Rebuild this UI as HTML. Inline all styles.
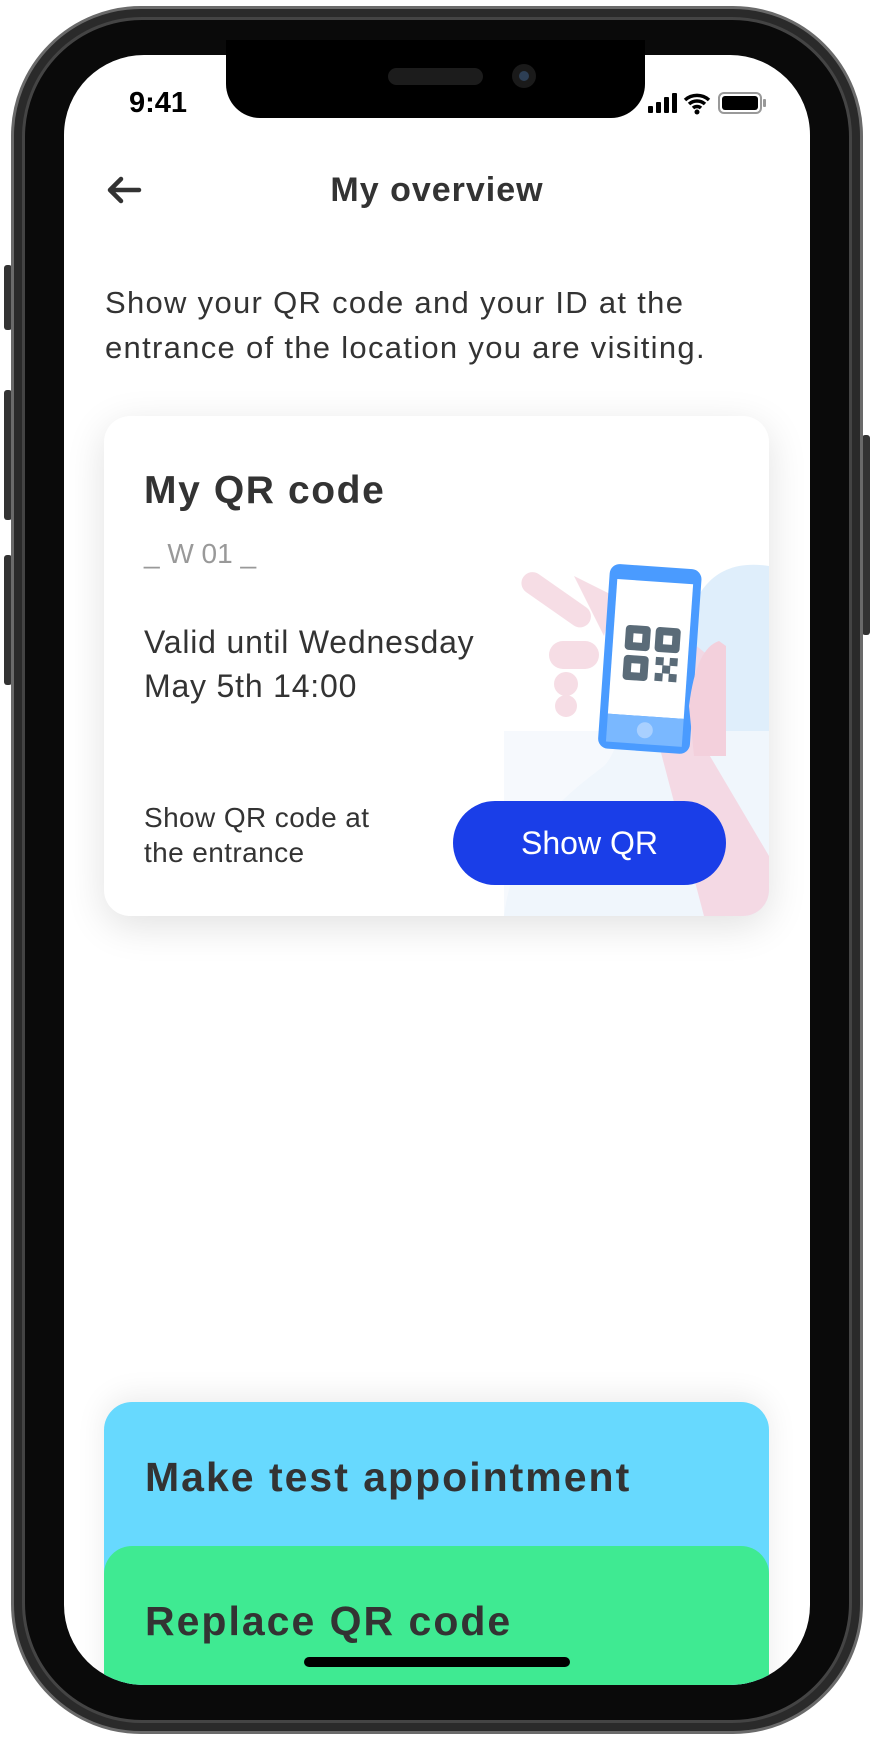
<!DOCTYPE html>
<html><head><meta charset="utf-8"><style>
*{margin:0;padding:0;box-sizing:border-box}
body{width:876px;height:1740px;background:#fff;position:relative;overflow:hidden;font-family:"Liberation Sans",sans-serif;color:#333}
.abs{position:absolute}
.frame{left:11px;top:6px;width:852px;height:1728px;border-radius:130px;background:#2a2a2a;border:3px solid #6a6a6a}
.frame2{left:22px;top:17px;width:830px;height:1706px;border-radius:120px;background:#0a0a0a;border:3px solid #444}
.screen{left:64px;top:55px;width:746px;height:1630px;border-radius:80px;background:#fff;overflow:hidden}
.notch{left:226px;top:40px;width:419px;height:78px;background:#000;border-radius:0 0 34px 34px}
.b{font-weight:bold}
</style></head><body>
<div class="abs" style="left:4px;top:265px;width:8px;height:65px;background:#333;border-radius:3px"></div>
<div class="abs" style="left:4px;top:390px;width:8px;height:130px;background:#333;border-radius:3px"></div>
<div class="abs" style="left:4px;top:555px;width:8px;height:130px;background:#333;border-radius:3px"></div>
<div class="abs" style="left:862px;top:435px;width:8px;height:200px;background:#333;border-radius:3px"></div>
<div class="abs frame"></div>
<div class="abs frame2"></div>
<div class="abs screen">
  <svg class="abs" style="left:41px;top:120px" width="38" height="30" viewBox="0 0 38 30"><path d="M34 15H6M16 4L5 15l11 11" stroke="#333" stroke-width="4.5" fill="none" stroke-linecap="round" stroke-linejoin="round"/></svg>
  <div class="abs b" style="left:0;width:746px;text-align:center;top:116px;font-size:34px;letter-spacing:1px;color:#333">My overview</div>
  <div class="abs" style="left:41px;top:225px;font-size:31px;letter-spacing:1.3px;line-height:45px;color:#333;white-space:nowrap">Show your QR code and your ID at the<br>entrance of the location you are visiting.</div>
  <div class="abs" style="left:40px;top:361px;width:665px;height:500px;border-radius:26px;background:#fff;box-shadow:0 10px 40px rgba(0,0,0,0.12);overflow:hidden">
    <svg class="abs" style="left:400px;top:100px" width="265" height="400" viewBox="0 0 265 400">
      <path d="M265 50 C200 40 180 90 175 160 C120 170 120 230 100 250 C60 280 10 320 0 400 L265 400Z" fill="#dfeefb"/>
      <rect x="0" y="215" width="265" height="185" fill="#f4f8fd" opacity="0.8"/>
      <path d="M150 210 L200 400 L265 400 L265 340 L200 230 L205 140 L180 120 Z" fill="#f5d3df" opacity="0.85"/>
      <path d="M70 60 L110 80 L100 120 Z" fill="#f6dde5"/>
      <rect x="20" y="50" width="80" height="22" rx="11" transform="rotate(35 20 60)" fill="#f6dde5"/>
      <g transform="rotate(4 140 140)">
        <rect x="100" y="50" width="92" height="185" rx="10" fill="#4a9bff"/>
        <rect x="108" y="65" width="76" height="135" fill="#fff"/>
        <rect x="108" y="200" width="76" height="28" fill="#7ab8ff"/>
        <circle cx="146" cy="214" r="8" fill="#a9d0ff"/>
        <g fill="#5a6b78">
          <rect x="120" y="110" width="25" height="25" rx="4"/><rect x="150" y="110" width="25" height="25" rx="4"/>
          <rect x="120" y="140" width="25" height="25" rx="4"/>
          <rect x="152" y="140" width="8" height="8"/><rect x="166" y="140" width="8" height="8"/><rect x="159" y="148" width="8" height="8"/><rect x="152" y="156" width="8" height="8"/><rect x="166" y="156" width="8" height="8"/>
        </g>
        <g fill="#fff"><rect x="128" y="118" width="9" height="9"/><rect x="158" y="118" width="9" height="9"/><rect x="128" y="148" width="9" height="9"/></g>
      </g>
      <rect x="45" y="125" width="50" height="28" rx="14" fill="#f6dde5"/>
      <circle cx="62" cy="168" r="12" fill="#f6dde5"/><circle cx="62" cy="190" r="11" fill="#f6dde5"/>
      <path d="M185 190 C190 150 200 130 215 125 L222 130 L222 240 L190 240 Z" fill="#f3d0dc"/>
    </svg>
    <div class="abs b" style="left:40px;top:53px;font-size:39px;letter-spacing:1.6px;color:#333">My QR code</div>
    <div class="abs" style="left:40px;top:122px;font-size:28px;color:#999">_ W 01 _</div>
    <div class="abs" style="left:40px;top:204px;font-size:32px;letter-spacing:0.8px;line-height:44px;color:#333">Valid until Wednesday<br>May 5th 14:00</div>
    <div class="abs" style="left:40px;top:384px;font-size:28px;letter-spacing:0.4px;line-height:35px;color:#333">Show QR code at<br>the entrance</div>
    <div class="abs" style="left:349px;top:385px;width:273px;height:84px;border-radius:42px;background:#1a3ee8;color:#fff;font-size:32px;line-height:84px;text-align:center">Show QR</div>
  </div>
  <div class="abs" style="left:40px;top:1347px;width:665px;height:400px;border-radius:28px;background:#67d9fe;box-shadow:0 -6px 30px rgba(0,0,0,0.08)"></div>
  <div class="abs b" style="left:81px;top:1399px;font-size:41px;letter-spacing:2px;color:#333">Make test appointment</div>
  <div class="abs" style="left:40px;top:1491px;width:665px;height:300px;border-radius:28px;background:#3fea92"></div>
  <div class="abs b" style="left:81px;top:1543px;font-size:41px;letter-spacing:2px;color:#333">Replace QR code</div>
  <div class="abs" style="left:240px;top:1602px;width:266px;height:10px;border-radius:5px;background:#000"></div>
</div>
<div class="abs notch"></div>
<div class="abs" style="left:388px;top:68px;width:95px;height:17px;border-radius:9px;background:#1c1c1c"></div>
<div class="abs" style="left:512px;top:64px;width:24px;height:24px;border-radius:50%;background:#1a1a1a"><div style="margin:7px;width:10px;height:10px;border-radius:50%;background:#2d3f55"></div></div>
<div class="abs b" style="left:129px;top:87px;font-size:29px;color:#000">9:41</div>
<svg class="abs" style="left:648px;top:91px" width="130" height="26" viewBox="0 0 130 26">
  <rect x="0" y="15" width="5" height="7" rx="1"/><rect x="8" y="11" width="5" height="11" rx="1"/><rect x="16" y="6" width="5" height="16" rx="1"/><rect x="24" y="2" width="5" height="20" rx="1"/>
  <path d="M37 9a18 18 0 0 1 24 0M41 13a12 12 0 0 1 16 0M45 17a6 6 0 0 1 8 0" stroke="#000" stroke-width="3.5" fill="none"/><circle cx="49" cy="21" r="2.5"/>
  <rect x="71" y="2" width="42" height="20" rx="5" fill="none" stroke="#999" stroke-width="2"/><rect x="74" y="5" width="36" height="14" rx="3"/><rect x="115" y="8" width="3" height="8" rx="1" fill="#999"/>
</svg>
</body></html>
